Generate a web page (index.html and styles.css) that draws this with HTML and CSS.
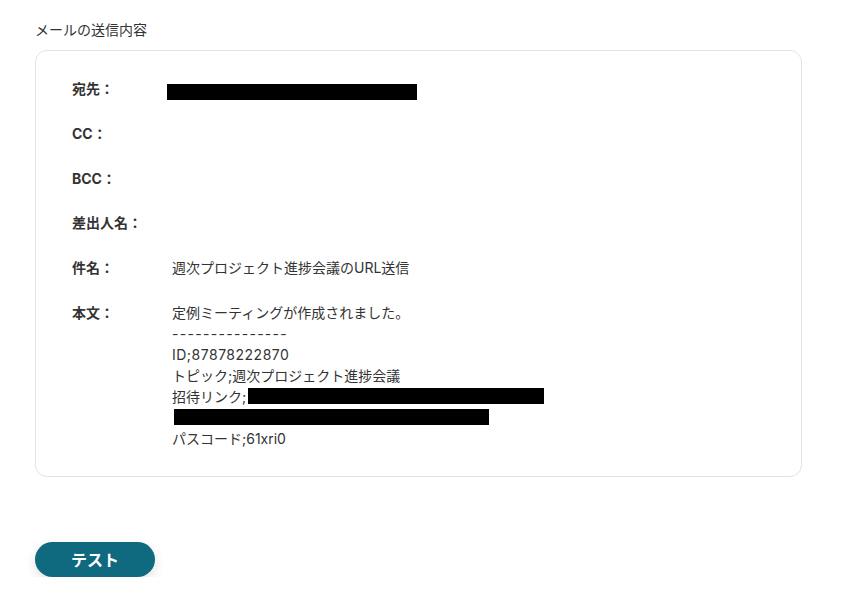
FILE: index.html
```html
<!DOCTYPE html>
<html lang="ja">
<head>
    <meta charset="UTF-8">
    <title>メールの送信内容</title>
    <link rel="stylesheet" href="styles.css">
</head>
<body>
    <div class="page">
        <h2 class="section-title">メールの送信内容</h2>

        <div class="mail-card">
            <div class="mail-row">
                <div class="mail-label">宛先：</div>
                <div class="mail-value"><span class="redact redact-to"></span></div>
            </div>
            <div class="mail-row">
                <div class="mail-label">CC：</div>
                <div class="mail-value"></div>
            </div>
            <div class="mail-row">
                <div class="mail-label">BCC：</div>
                <div class="mail-value"></div>
            </div>
            <div class="mail-row">
                <div class="mail-label">差出人名：</div>
                <div class="mail-value"></div>
            </div>
            <div class="mail-row">
                <div class="mail-label">件名：</div>
                <div class="mail-value">週次プロジェクト進捗会議のURL送信</div>
            </div>
            <div class="mail-row">
                <div class="mail-label">本文：</div>
                <div class="mail-value body-text">
                    <div>定例ミーティングが作成されました。</div>
                    <div class="dashes">---------------</div>
                    <div class="latin-wide">ID;87878222870</div>
                    <div>トピック;週次プロジェクト進捗会議</div>
                    <div class="line-redact">招待リンク;<span class="redact redact-link"></span></div>
                    <div class="line-redact"><span class="redact redact-link2"></span></div>
                    <div>パスコード;61xri0</div>
                </div>
            </div>
        </div>

        <button type="button" class="test-button">テスト</button>
    </div>
</body>
</html>
```

FILE: styles.css
```css
body {
    margin: 0;
    font-family: Inter, "Noto Sans CJK JP", sans-serif;
    color: #333;
    background-color: #fff;
}

.page {
    padding: 19px 35px 0 35px;
    width: 767px;
}

.section-title {
    margin: 0 0 10px 0;
    font-size: 14px;
    font-weight: normal;
    line-height: 21px;
    color: #333;
}

.mail-card {
    border: 1px solid #e3e3e3;
    border-radius: 12px;
    padding: 27px 36px 27px 36px;
    display: flex;
    flex-direction: column;
    gap: 23.6px;
}

.mail-row {
    display: flex;
    font-size: 14px;
    line-height: 21px;
}

.mail-label {
    width: 100px;
    flex-shrink: 0;
    font-weight: bold;
    color: #333;
}

.mail-value {
    min-height: 21px;
    color: #333;
}

.body-text div {
    height: 21px;
}

.dashes {
    letter-spacing: 1.3px;
}

.latin-wide {
    letter-spacing: 0.5px;
}

.line-redact {
    display: flex;
    align-items: center;
}

.redact {
    display: inline-block;
    background-color: #000;
    height: 16px;
}

.redact-to {
    width: 250px;
    margin-left: -5px;
    vertical-align: middle;
    margin-top: 3px;
}

.redact-link {
    width: 296px;
    margin-left: 2px;
}

.redact-link2 {
    width: 315px;
    margin-left: 2px;
}

.test-button {
    margin-top: 65px;
    width: 120px;
    height: 35px;
    border: none;
    border-radius: 18px;
    background-color: #0f6a80;
    color: #fff;
    font-family: "Noto Sans CJK JP", sans-serif;
    font-size: 16px;
    font-weight: bold;
    cursor: pointer;
    box-shadow: 0 4px 12px rgba(0, 0, 0, 0.12);
}
```
